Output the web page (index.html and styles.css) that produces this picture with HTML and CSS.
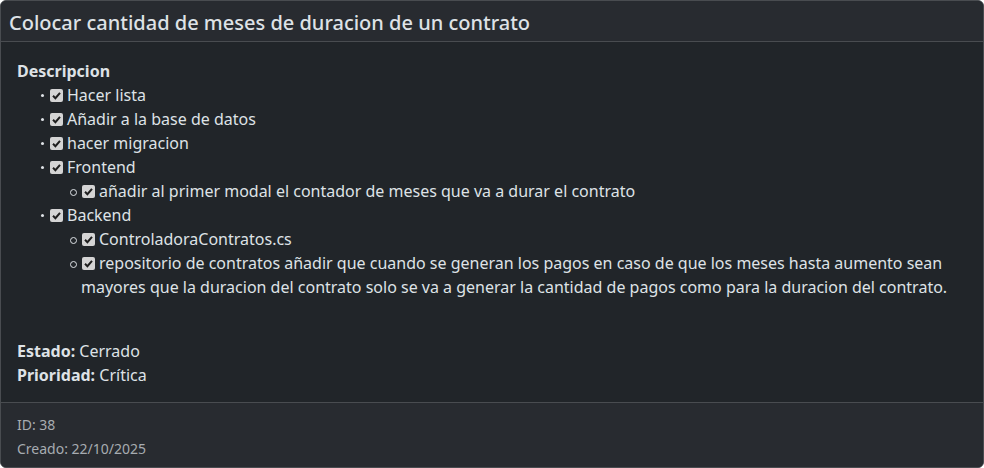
FILE: index.html
```html
<!DOCTYPE html>
<html lang="es">
<head>
<meta charset="utf-8">
<link rel="stylesheet" href="styles.css">
</head>
<body>
<div class="card">
  <div class="card-header">
    <h5 class="title">Colocar cantidad de meses de duracion de un contrato</h5>
  </div>
  <div class="card-body">
    <div class="desc">
      <strong>Descripcion</strong>
      <ul class="tasks">
        <li><span class="cb"><svg viewBox="0 0 13 13" width="13" height="13"><path d="M3 6.8 L5.4 9.2 L10 3.8" fill="none" stroke="#1e1e1e" stroke-width="2"/></svg></span>Hacer lista</li>
        <li><span class="cb"><svg viewBox="0 0 13 13" width="13" height="13"><path d="M3 6.8 L5.4 9.2 L10 3.8" fill="none" stroke="#1e1e1e" stroke-width="2"/></svg></span>Añadir a la base de datos</li>
        <li><span class="cb"><svg viewBox="0 0 13 13" width="13" height="13"><path d="M3 6.8 L5.4 9.2 L10 3.8" fill="none" stroke="#1e1e1e" stroke-width="2"/></svg></span>hacer migracion</li>
        <li><span class="cb"><svg viewBox="0 0 13 13" width="13" height="13"><path d="M3 6.8 L5.4 9.2 L10 3.8" fill="none" stroke="#1e1e1e" stroke-width="2"/></svg></span>Frontend
          <ul class="sub">
            <li><span class="cb"><svg viewBox="0 0 13 13" width="13" height="13"><path d="M3 6.8 L5.4 9.2 L10 3.8" fill="none" stroke="#1e1e1e" stroke-width="2"/></svg></span>añadir al primer modal el contador de meses que va a durar el contrato</li>
          </ul>
        </li>
        <li><span class="cb"><svg viewBox="0 0 13 13" width="13" height="13"><path d="M3 6.8 L5.4 9.2 L10 3.8" fill="none" stroke="#1e1e1e" stroke-width="2"/></svg></span>Backend
          <ul class="sub">
            <li><span class="cb"><svg viewBox="0 0 13 13" width="13" height="13"><path d="M3 6.8 L5.4 9.2 L10 3.8" fill="none" stroke="#1e1e1e" stroke-width="2"/></svg></span>ControladoraContratos.cs</li>
            <li><span class="cb"><svg viewBox="0 0 13 13" width="13" height="13"><path d="M3 6.8 L5.4 9.2 L10 3.8" fill="none" stroke="#1e1e1e" stroke-width="2"/></svg></span>repositorio de contratos añadir que cuando se generan los pagos en caso de que los meses hasta aumento sean mayores que la duracion del contrato solo se va a generar la cantidad de pagos como para la duracion del contrato.</li>
          </ul>
        </li>
      </ul>
    </div>
    <div class="meta">
      <div><strong>Estado:</strong> Cerrado</div>
      <div><strong>Prioridad:</strong> Crítica</div>
    </div>
  </div>
  <div class="card-footer">
    <div class="small">ID: 38</div>
    <div class="small">Creado: 22/10/2025</div>
  </div>
</div>
</body>
</html>
```
FILE: styles.css
```css
* { box-sizing: border-box; }
html, body { margin: 0; padding: 0; background: #ffffff; }
body {
  font-family: "Noto Sans", "Open Sans", sans-serif;
  font-size: 16px;
  line-height: 24px;
  color: #dee2e6;
}
.card {
  width: 984px;
  height: 468px;
  background: #212529;
  border: 1px solid #494c50;
  border-radius: 6px;
  overflow: hidden;
  display: flex;
  flex-direction: column;
}
.card-header {
  background: #282b30;
  border-bottom: 1px solid #494c50;
  padding: 10px 8px 6px 8px;
}
.title {
  margin: 0;
  font-size: 20px;
  line-height: 24px;
  font-weight: 500;
  color: #dee2e6;
}
.card-body {
  padding: 17px 16px 15px 16px;
  flex: 1;
}
.desc strong, .meta strong { font-weight: 700; }
.tasks {
  margin: 0 0 40px 0;
  padding-left: 32px;
  list-style: none;
}
.tasks li { position: relative; }
.tasks > li::before {
  content: "";
  position: absolute;
  left: -8px;
  top: 11px;
  width: 3px;
  height: 3px;
  border-radius: 50%;
  background: #dee2e6;
}
.sub {
  margin: 0;
  padding-left: 32px;
  list-style: none;
}
.tasks .sub > li::before {
  content: "";
  position: absolute;
  left: -11px;
  top: 10px;
  width: 5px;
  height: 5px;
  border-radius: 50%;
  border: 1px solid #dee2e6;
  background: transparent;
}
.cb {
  display: inline-block;
  width: 13px;
  height: 13px;
  background: #d4d4d4;
  border-radius: 2px;
  vertical-align: -1px;
  margin-right: 4px;
  margin-left: 1px;
}
.cb svg { display: block; }
.card-footer {
  background: #282b30;
  border-top: 1px solid #494c50;
  padding: 10px 16px 6px 16px;
}
.small {
  font-size: 14px;
  line-height: 24px;
  color: #a7acb1;
}
```
